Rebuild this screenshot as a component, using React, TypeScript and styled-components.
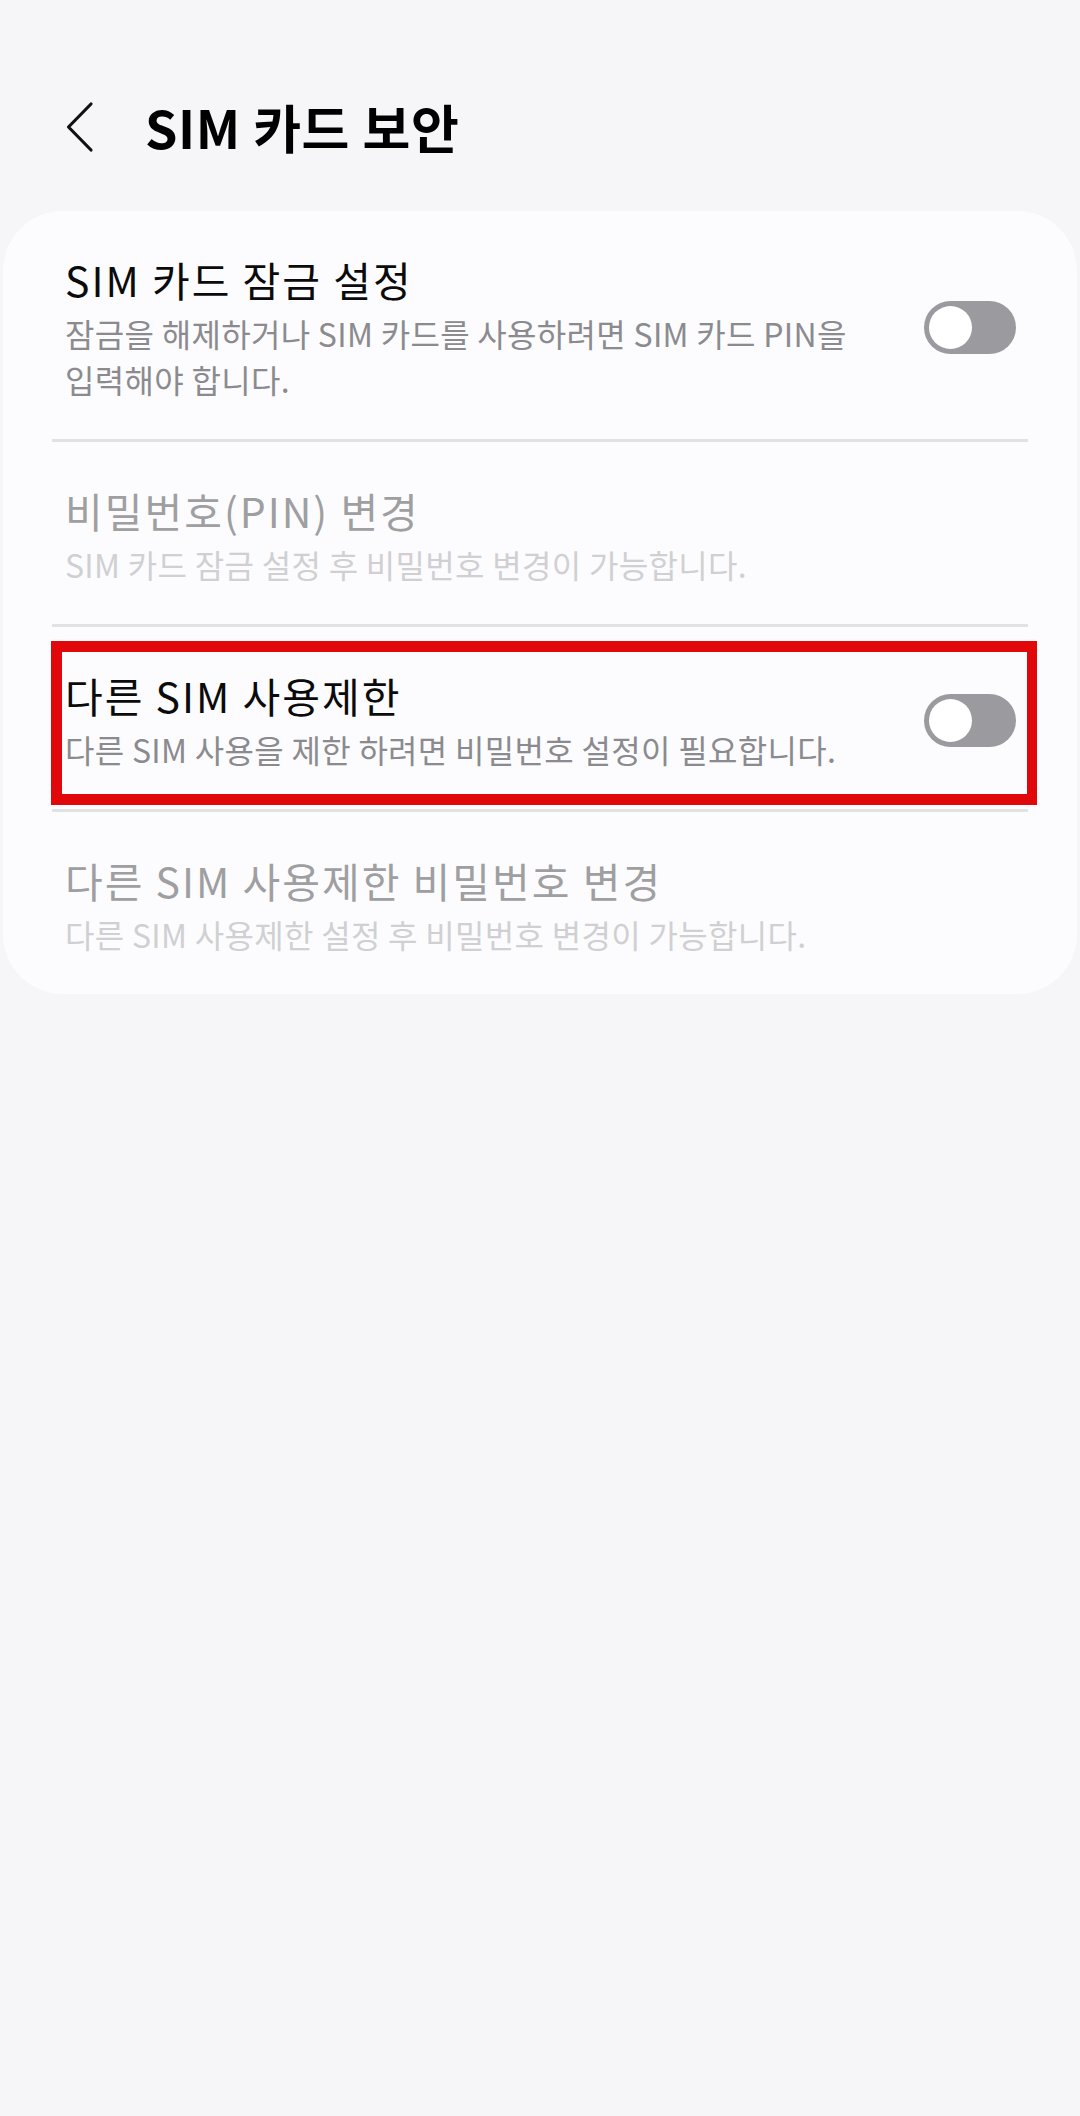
import React from "react";
import styled, { createGlobalStyle } from "styled-components";

const GlobalStyle = createGlobalStyle`
  html, body {
    margin: 0;
    padding: 0;
    background: #f6f6f8;
  }
  body {
    font-family: "Noto Sans CJK KR", "Noto Sans", sans-serif;
    -webkit-font-smoothing: antialiased;
  }
`;

const Screen = styled.div`
  width: 1080px;
  min-height: 2116px;
  background: #f6f6f8;
  box-sizing: border-box;
`;

const Header = styled.header`
  display: flex;
  align-items: center;
  gap: 50px;
  padding: 80px 0 37px 65px;
  height: 94px;
`;

const BackButton = styled.button`
  display: flex;
  align-items: center;
  justify-content: center;
  width: 30px;
  height: 54px;
  padding: 0;
  border: none;
  background: transparent;
  cursor: pointer;
`;

const Title = styled.h1`
  margin: 0;
  font-size: 52px;
  line-height: 94px;
  font-weight: 700;
  color: #000;
  letter-spacing: 0.6px;
`;

const Card = styled.section`
  margin: 0 3px;
  background: #fcfcfe;
  border-radius: 60px;
  overflow: hidden;
`;

const Item = styled.div`
  position: relative;
  display: flex;
  align-items: center;
  gap: 28px;
  padding: 41px 61px 37px 62px;
`;

const TextBlock = styled.div`
  flex: 1;
  min-width: 0;
  display: flex;
  flex-direction: column;
  gap: 4px;
  word-break: keep-all;
`;

const ItemTitle = styled.div<{ $disabled?: boolean }>`
  font-size: 41px;
  line-height: 54px;
  color: ${(p) => (p.$disabled ? "#9f9fa2" : "#0b0b0b")};
  letter-spacing: 2px;
`;

const ItemSub = styled.div<{ $disabled?: boolean }>`
  font-size: 32px;
  line-height: 46px;
  color: ${(p) => (p.$disabled ? "#d0d0d3" : "#8b8b8f")};
  letter-spacing: 0.3px;
`;

const Divider = styled.hr`
  margin: 0 49px;
  height: 3px;
  border: none;
  background: #e2e2e4;
`;

const Track = styled.div<{ $on?: boolean }>`
  flex: none;
  position: relative;
  width: 92px;
  height: 53px;
  border-radius: 27px;
  background: ${(p) => (p.$on ? "#3e91ff" : "#9b9a9f")};
`;

const Thumb = styled.span<{ $on?: boolean }>`
  position: absolute;
  top: 5px;
  left: ${(p) => (p.$on ? "44px" : "5px")};
  width: 43px;
  height: 43px;
  border-radius: 50%;
  background: #ffffff;
`;

const Highlight = styled.div`
  position: absolute;
  top: 14px;
  bottom: 4px;
  left: 48px;
  right: 40px;
  border: 11px solid #e0080b;
  border-right-width: 10px;
  pointer-events: none;
`;

const Toggle = ({ on }: { on?: boolean }) => (
  <Track $on={on}>
    <Thumb $on={on} />
  </Track>
);

type Setting = {
  title: string;
  sub: string;
  toggle?: boolean;
  disabled?: boolean;
  marked?: boolean;
};

const settings: Setting[] = [
  {
    title: "SIM 카드 잠금 설정",
    sub: "잠금을 해제하거나 SIM 카드를 사용하려면 SIM 카드 PIN을 입력해야 합니다.",
    toggle: true,
  },
  {
    title: "비밀번호(PIN) 변경",
    sub: "SIM 카드 잠금 설정 후 비밀번호 변경이 가능합니다.",
    disabled: true,
  },
  {
    title: "다른 SIM 사용제한",
    sub: "다른 SIM 사용을 제한 하려면 비밀번호 설정이 필요합니다.",
    toggle: true,
    marked: true,
  },
  {
    title: "다른 SIM 사용제한 비밀번호 변경",
    sub: "다른 SIM 사용제한 설정 후 비밀번호 변경이 가능합니다.",
    disabled: true,
  },
];

export default function App() {
  return (
    <Screen>
      <GlobalStyle />
      <Header>
        <BackButton aria-label="뒤로">
          <svg width="30" height="54" viewBox="0 0 30 54" fill="none">
            <polyline
              points="26,4 3.5,27 26,50"
              stroke="#111"
              strokeWidth="3.2"
              strokeLinecap="round"
              strokeLinejoin="round"
            />
          </svg>
        </BackButton>
        <Title>SIM 카드 보안</Title>
      </Header>
      <Card>
        {settings.map((s, i) => (
          <React.Fragment key={s.title}>
            {i > 0 && <Divider />}
            <Item>
              <TextBlock>
                <ItemTitle $disabled={s.disabled}>{s.title}</ItemTitle>
                <ItemSub $disabled={s.disabled}>{s.sub}</ItemSub>
              </TextBlock>
              {s.toggle && <Toggle />}
              {s.marked && <Highlight />}
            </Item>
          </React.Fragment>
        ))}
      </Card>
    </Screen>
  );
}
